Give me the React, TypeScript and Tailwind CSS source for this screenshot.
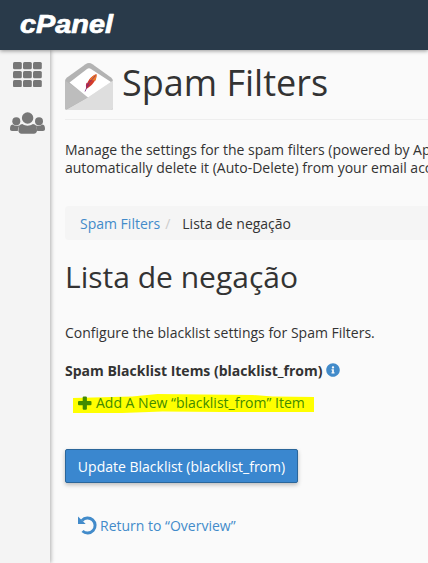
import { FaInfoCircle } from 'react-icons/fa';

const gridCells = [0, 1, 2].flatMap((row) => [0, 1, 2].map((col) => ({ x: col * 10, y: row * 9 })));

function GridIcon() {
  return (
    <svg className="w-[29px] h-[25px]" viewBox="0 0 29 25" fill="#777">
      {gridCells.map((cell) => (
        <rect key={`${cell.x}-${cell.y}`} x={cell.x} y={cell.y} width="8.8" height="7.2" rx="1.5" />
      ))}
    </svg>
  );
}

function UsersIcon() {
  return (
    <svg className="w-[35px] h-[22px]" viewBox="0 0 35 22" fill="#777">
      <circle cx="6.3" cy="9.2" r="4" />
      <circle cx="29" cy="9.2" r="4" />
      <path d="M2.500 12.600c2.500 1.600 5 1.600 7.500.4-1.300 1.200-2 3.200-2.200 6H2c-1.300 0-2-.8-2-2 0-2.500.7-4.300 2.500-4.400z" />
      <path d="M32.500 12.600c-2.500 1.600-5 1.600-7.500.4 1.300 1.200 2 3.200 2.200 6H33c1.300 0 2-.8 2-2 0-2.500-.7-4.300-2.500-4.400z" />
      <circle cx="17.600" cy="6" r="5.700" />
      <path d="M12.300 12c3.300 2.200 7.300 2.200 10.600 0 2.700.2 4.100 2.600 4.100 6.500 0 2-1.200 3.200-3.200 3.200H11.600c-2 0-3.200-1.200-3.200-3.200 0-3.900 1.300-6.300 3.900-6.500z" />
    </svg>
  );
}

function EnvelopeIcon() {
  return (
    <svg className="w-12 h-[47px] shrink-0" viewBox="0 0 48 47">
      <path d="M0 18Q0 16 2 14.500L20.500 1.200q3.500-2.400 7 0L46 14.500Q48 16 48 18v27q0 2-2 2H2q-2 0-2-2z" fill="#b3b3b3" />
      <path d="M48 17.500V45q0 2-2 2H.8L23.500 34z" fill="#dedede" />
      <path d="M0 17.500 23.500 34 1 46.500Q0 46 0 45z" fill="#bdbdbd" />
      <path d="M4.500 19.500 22 6q2-1.300 4 0L46 19 23 34.500z" fill="#fff" />
      <path d="M31.500 11.200c-4.500 1-10.500 7-10.500 14.800 5-2.500 11-8.500 10.500-14.800z" fill="#d33a2c" />
      <path d="M31.500 11.200c-2.500.5-5 2.500-7 5.500l6 1c.8-2 1.200-4.500 1-6.500z" fill="#ee7a28" />
      <path d="M21.500 19.800q-1 2.500-.5 5.200 2-1 4-2.800z" fill="#b2294e" />
      <path d="M30.500 12.500q-8 7-10.500 16" stroke="#7b2f7b" strokeWidth=".8" fill="none" />
    </svg>
  );
}

function PlusIcon() {
  return (
    <svg className="w-[14px] h-[14px]" viewBox="0 0 14 14" fill="currentColor">
      <rect x="0" y="5" width="13.500" height="4.200" rx="1" />
      <rect x="4.700" y=".4" width="4.200" height="13.400" rx="1" />
    </svg>
  );
}

function UndoIcon() {
  return (
    <svg className="w-[19px] h-[19px]" viewBox="0 0 19 19">
      <path d="M4 4.500a7.500 7.500 0 1 1 .5 10.500" stroke="#428bca" strokeWidth="3" fill="none" />
      <path d="M0 .5v7.500h7.700z" fill="#428bca" />
    </svg>
  );
}

export default function App() {
  return (
    <div className="w-full h-[563px] overflow-hidden flex flex-col bg-[#fafafa] text-[#333] text-[14px] leading-[18px] font-['Open_Sans','Noto_Sans',sans-serif]">
      <header className="relative z-10 h-[50px] shrink-0 bg-[#293a4a] shadow-[0_1px_4px_rgba(0,0,0,0.4)] pl-[19px] pt-2">
        <svg className="w-[104px] h-[34px]" viewBox="0 0 104 34">
          <text
            x="1"
            y="25"
            textLength="93"
            lengthAdjust="spacingAndGlyphs"
            stroke="#fff"
            strokeWidth=".7"
            strokeLinejoin="round"
            className="fill-white font-bold italic text-[25px] font-['Liberation_Sans',sans-serif]"
          >
            cPanel
          </text>
        </svg>
      </header>

      <div className="flex flex-1 min-h-0">
        {/* Sidebar */}
        <nav className="w-[50px] shrink-0 bg-[#f4f4f4] shadow-[1px_0_4px_rgba(0,0,0,0.3)] flex flex-col pt-3">
          <a className="ml-[13px]"><GridIcon /></a>
          <a className="ml-[10px] mt-[25px]"><UsersIcon /></a>
        </nav>

        <main className="flex-1 min-w-0 pl-[15px] whitespace-nowrap">
          <div className="h-[70px] flex pt-[13px] border-b border-[#eee]">
            <EnvelopeIcon />
            <h1 className="ml-[9px] text-[36px] leading-[40px]">Spam Filters</h1>
          </div>

          <p className="mt-[21px]">
            Manage the settings for the spam filters (powered by Ap
            <br />
            automatically delete it (Auto-Delete) from your email acc
          </p>

          {/* Breadcrumb */}
          <ol className="mt-[29px] h-[34px] pt-[2px] pl-[15px] flex items-center bg-[#f5f5f5] rounded-l">
            <li className="text-[#428bca]">Spam Filters</li>
            <li className="ml-[5px] text-[#ccc]">/</li>
            <li className="ml-3">Lista de negação</li>
          </ol>

          <h2 className="mt-[20px] text-[30px] leading-[34px]">Lista de negação</h2>
          <p className="mt-[30px]">Configure the blacklist settings for Spam Filters.</p>

          <div className="mt-[20px] flex items-center gap-1 font-bold">
            Spam Blacklist Items (blacklist_from)
            <FaInfoCircle className="size-[14px] -mt-[2px] text-[#428bca]" />
          </div>

          <div className="relative mt-[14px] h-[20px] w-[242px] ml-[7px]">
            <svg className="absolute inset-0 w-full h-full" viewBox="0 0 241 20" preserveAspectRatio="none">
              <path d="M1 4 60 2.500 85 0 180 1 200 2.500 241 3V18L150 18 90 17.500 50 19 1 19z" fill="#ffff00" />
            </svg>
            <a className="relative flex items-center gap-1 pl-[6px] text-[#428b00]">
              <PlusIcon />
              Add A New “blacklist_from” Item
            </a>
          </div>

          <button className="mt-[35px] w-[233px] h-[34px] pt-[2px] flex items-center justify-center rounded-[2px] border border-[#2b669a] bg-[#3a87cf] text-white shadow-[0_2px_4px_rgba(0,0,0,0.25)]">
            Update Blacklist (blacklist_from)
          </button>

          <a className="mt-[33px] ml-[13px] flex items-center gap-[3px] text-[#428bca]">
            <UndoIcon />
            Return to “Overview”
          </a>
        </main>
      </div>
    </div>
  );
}
